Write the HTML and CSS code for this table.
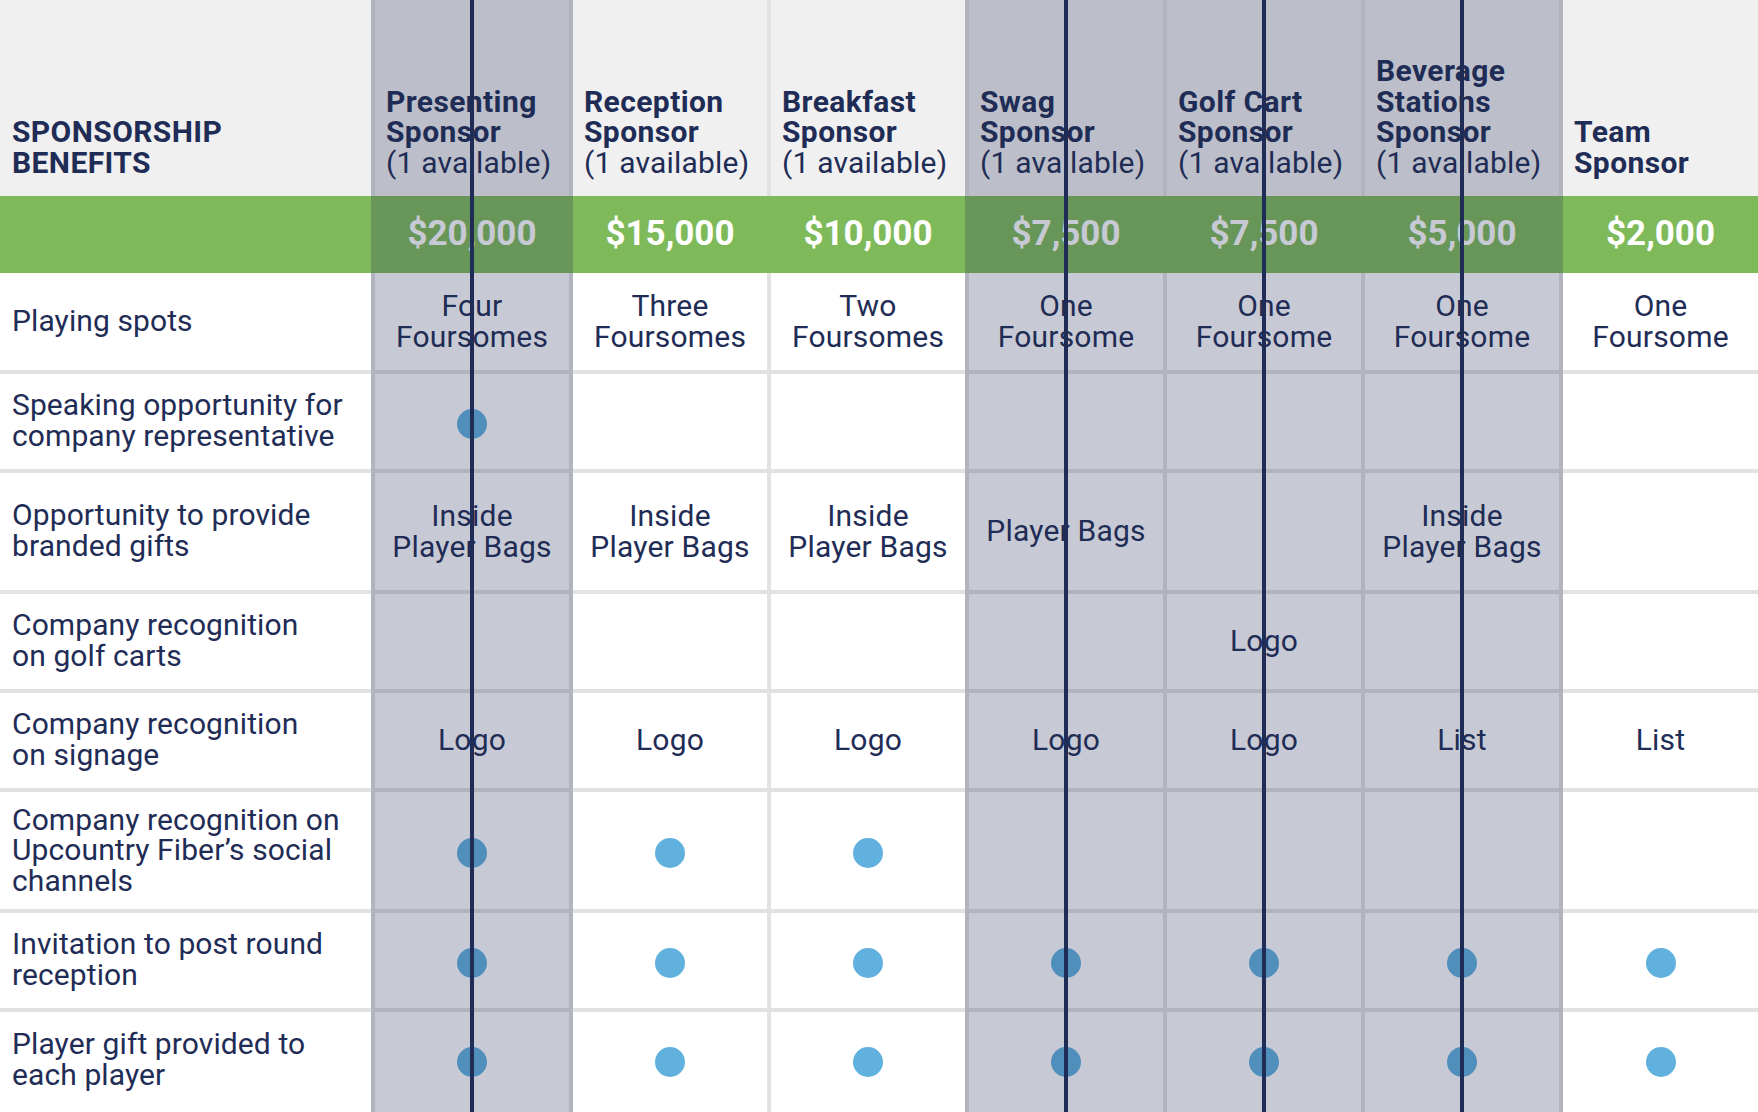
FILE: index.html
```html
<!DOCTYPE html>
<html lang="en">
<head>
<meta charset="utf-8">
<title>Sponsorship Benefits</title>
<link rel="stylesheet" href="styles.css">
</head>
<body>
<div class="sheet">
  <div class="hd lbl"><b>SPONSORSHIP<br>BENEFITS</b></div>
  <div class="hd col"><b>Presenting<br>Sponsor</b><span>(1 available)</span></div>
  <div class="hd col"><b>Reception<br>Sponsor</b><span>(1 available)</span></div>
  <div class="hd col"><b>Breakfast<br>Sponsor</b><span>(1 available)</span></div>
  <div class="hd col"><b>Swag<br>Sponsor</b><span>(1 available)</span></div>
  <div class="hd col"><b>Golf Cart<br>Sponsor</b><span>(1 available)</span></div>
  <div class="hd col"><b>Beverage<br>Stations<br>Sponsor</b><span>(1 available)</span></div>
  <div class="hd col"><b>Team<br>Sponsor</b></div>

  <div class="pr"></div>
  <div class="pr">$20,000</div>
  <div class="pr">$15,000</div>
  <div class="pr">$10,000</div>
  <div class="pr">$7,500</div>
  <div class="pr">$7,500</div>
  <div class="pr">$5,000</div>
  <div class="pr">$2,000</div>

  <div class="lb">Playing spots</div>
  <div class="cv">Four<br>Foursomes</div>
  <div class="cv">Three<br>Foursomes</div>
  <div class="cv">Two<br>Foursomes</div>
  <div class="cv">One<br>Foursome</div>
  <div class="cv">One<br>Foursome</div>
  <div class="cv">One<br>Foursome</div>
  <div class="cv">One<br>Foursome</div>

  <div class="lb two">Speaking opportunity for<br>company representative</div>
  <div class="cv"><span class="dot"></span></div>
  <div class="cv"></div>
  <div class="cv"></div>
  <div class="cv"></div>
  <div class="cv"></div>
  <div class="cv"></div>
  <div class="cv"></div>

  <div class="lb two">Opportunity to provide<br>branded gifts</div>
  <div class="cv">Inside<br>Player Bags</div>
  <div class="cv">Inside<br>Player Bags</div>
  <div class="cv">Inside<br>Player Bags</div>
  <div class="cv">Player Bags</div>
  <div class="cv"></div>
  <div class="cv">Inside<br>Player Bags</div>
  <div class="cv"></div>

  <div class="lb two">Company recognition<br>on golf carts</div>
  <div class="cv"></div>
  <div class="cv"></div>
  <div class="cv"></div>
  <div class="cv"></div>
  <div class="cv">Logo</div>
  <div class="cv"></div>
  <div class="cv"></div>

  <div class="lb two">Company recognition<br>on signage</div>
  <div class="cv">Logo</div>
  <div class="cv">Logo</div>
  <div class="cv">Logo</div>
  <div class="cv">Logo</div>
  <div class="cv">Logo</div>
  <div class="cv">List</div>
  <div class="cv">List</div>

  <div class="lb">Company recognition on<br>Upcountry Fiber’s social<br>channels</div>
  <div class="cv"><span class="dot"></span></div>
  <div class="cv"><span class="dot"></span></div>
  <div class="cv"><span class="dot"></span></div>
  <div class="cv"></div>
  <div class="cv"></div>
  <div class="cv"></div>
  <div class="cv"></div>

  <div class="lb two">Invitation to post round<br>reception</div>
  <div class="cv"><span class="dot"></span></div>
  <div class="cv"><span class="dot"></span></div>
  <div class="cv"><span class="dot"></span></div>
  <div class="cv"><span class="dot"></span></div>
  <div class="cv"><span class="dot"></span></div>
  <div class="cv"><span class="dot"></span></div>
  <div class="cv"><span class="dot"></span></div>

  <div class="lb two last">Player gift provided to<br>each player</div>
  <div class="cv last"><span class="dot"></span></div>
  <div class="cv last"><span class="dot"></span></div>
  <div class="cv last"><span class="dot"></span></div>
  <div class="cv last"><span class="dot"></span></div>
  <div class="cv last"><span class="dot"></span></div>
  <div class="cv last"><span class="dot"></span></div>
  <div class="cv last"><span class="dot"></span></div>

  <div class="sold sold-one"><i class="strike"></i></div>
  <div class="sold sold-three"><i class="strike"></i><i class="strike"></i><i class="strike"></i></div>
</div>
</body>
</html>
```

FILE: styles.css
```css
* {
  box-sizing: border-box;
}

html,
body {
  margin: 0;
  padding: 0;
  background: #ffffff;
}

body {
  width: 1758px;
  height: 1112px;
  overflow: hidden;
  font-family: Roboto, "Liberation Sans", sans-serif;
  color: #1f2d56;
}

.sheet {
  position: relative;
  display: grid;
  grid-template-columns: 371px repeat(6, 198px) 1fr;
  grid-template-rows: 196px 77px 101px 99px 121px 99px 99px 121px 99px 100px;
  height: 1112px;
  font-size: 30px;
  line-height: 30.5px;
}

/* header */
.hd {
  background: #f0f0f0;
  display: flex;
  flex-direction: column;
  justify-content: flex-end;
  padding: 0 0 18px 11px;
}

.hd b {
  font-weight: 700;
  letter-spacing: 0.4px;
}

.hd span {
  font-weight: 400;
  letter-spacing: 0.2px;
}

.hd.lbl {
  padding-left: 12px;
}

.hd.col {
  border-left: 4px solid #e2e2e2;
}

/* price band */
.pr {
  background: #7fba5a;
  color: #ffffff;
  font-weight: 700;
  font-size: 35px;
  display: flex;
  align-items: center;
  justify-content: center;
  padding-left: 4px;
}

.pr:first-of-type {
  padding-left: 0;
}

/* body */
.lb,
.cv {
  background: #ffffff;
  border-bottom: 4px solid #e2e2e2;
  display: flex;
  align-items: center;
}

.lb {
  padding-left: 12px;
  letter-spacing: 0.1px;
}

.lb.two {
  padding-bottom: 2px;
}

.cv {
  border-left: 4px solid #e2e2e2;
  justify-content: center;
  text-align: center;
  letter-spacing: 0.2px;
}

.lb.last,
.cv.last {
  border-bottom: 0;
  padding-bottom: 5px;
}

.dot {
  display: block;
  width: 30px;
  height: 30px;
  border-radius: 50%;
  background: #60b1de;
  margin-top: 5px;
}

/* sold-out overlay columns */
.sold {
  position: absolute;
  top: 0;
  bottom: 0;
  left: 0;
  right: -4px;
  background: rgba(31, 45, 84, 0.25);
  display: grid;
  pointer-events: none;
}

.sold-one {
  grid-column: 2 / 3;
  grid-template-columns: 1fr;
  padding: 0 4px;
}

.sold-three {
  grid-column: 5 / 8;
  grid-template-columns: repeat(3, 1fr);
  padding-right: 4px;
}

.sold-three .strike {
  margin-left: 4px;
}

.strike {
  display: block;
  background: linear-gradient(#1f2d56, #1f2d56) center / 4px 100% no-repeat;
}
```
